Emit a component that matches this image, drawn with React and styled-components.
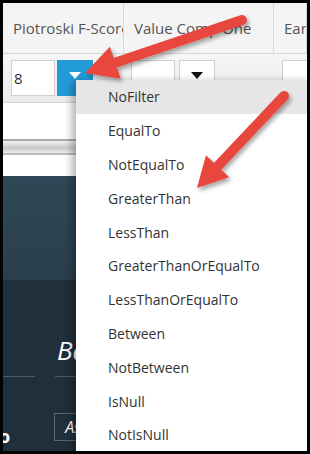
import React from "react";
import styled, { createGlobalStyle } from "styled-components";

const GlobalStyle = createGlobalStyle`
  html, body {
    margin: 0;
    padding: 0;
    background: #000;
  }
  * {
    box-sizing: border-box;
  }
`;

const Screen = styled.div`
  width: 310px;
  height: 454px;
  padding: 3px;
  background: #000;
  position: relative;
  font-family: "Open Sans", "Noto Sans", sans-serif;
`;

const Viewport = styled.div`
  width: 304px;
  height: 448px;
  position: relative;
  overflow: hidden;
  background: #fff;
  display: flex;
  flex-direction: column;
`;

const Row = styled.div`
  display: grid;
  grid-template-columns: 121px 150px 1fr;
  height: ${(p) => p.h}px;
  border-bottom: 1px solid #d6d6d6;
  background: ${(p) =>
    p.filter ? "linear-gradient(#f6f6f6, #ebebeb)" : "#f4f4f4"};
  flex-shrink: 0;
`;

const HeadCell = styled.div`
  border-right: 1px solid #d9d9d9;
  padding-left: 10px;
  display: flex;
  align-items: center;
  font-size: 15px;
  color: #555;
  white-space: nowrap;
  overflow: hidden;
`;

const FilterCell = styled.div`
  display: flex;
  align-items: center;
  gap: 2px;
  padding-left: ${(p) => p.pad}px;
`;

const Input = styled.div`
  width: 44px;
  height: 36px;
  background: #fff;
  border: 1px solid #cfcfcf;
  display: flex;
  align-items: center;
  padding-left: 2px;
  font-size: 15px;
  color: #333;
`;

const DropButton = styled.div`
  width: 36px;
  height: 36px;
  margin-left: ${(p) => p.gap || 0}px;
  background: ${(p) => (p.active ? "#239bd8" : "#fff")};
  border: 1px solid ${(p) => (p.active ? "#239bd8" : "#cfcfcf")};
  display: flex;
  justify-content: center;
  padding-top: 11px;
`;

const Triangle = styled.div`
  width: 0;
  height: 0;
  border-left: 6px solid transparent;
  border-right: 6px solid transparent;
  border-top: 7px solid ${(p) => (p.white ? "#fff" : "#111")};
`;

const Blank = styled.div`
  height: ${(p) => p.h}px;
  flex-shrink: 0;
  background: #fff;
`;

const Scrollbar = styled.div`
  height: 16px;
  flex-shrink: 0;
  border-top: 2px solid #a9a9a9;
  background: linear-gradient(#f2f2f2, #d4d4d4 45%, #c8c8c8 55%, #ececec);
  border-bottom: 2px solid #bdbdbd;
`;

const Dark = styled.div`
  flex: 1;
  display: flex;
  flex-direction: column;
  background: #1f2f3c;
`;

const DarkTop = styled.div`
  height: 104px;
  background: linear-gradient(#2f4756, #2a3f4d);
`;

const Banner = styled.div`
  padding: 52px 0 0 54px;
  font-size: 26px;
  font-style: italic;
  color: #fff;
`;

const Rules = styled.div`
  display: flex;
  gap: 20px;
  margin-top: 8px;
`;

const Rule = styled.div`
  width: ${(p) => p.w}px;
  height: 1px;
  background: #4a5c68;
`;

const Footer = styled.div`
  display: flex;
  align-items: flex-end;
  margin-top: 36px;
  gap: 44px;
`;

const Logo = styled.span`
  font-weight: 700;
  font-size: 18px;
  color: #fff;
  margin-left: -4px;
  line-height: 10px;
`;

const Outlined = styled.div`
  width: 40px;
  height: 28px;
  border: 1px solid #566873;
  color: #fff;
  font-style: italic;
  font-size: 16px;
  padding: 2px 0 0 10px;
`;

const Menu = styled.div`
  position: absolute;
  left: 73px;
  top: 77px;
  width: 240px;
  background: #fff;
  box-shadow: -4px 2px 8px rgba(0, 0, 0, 0.3);
  display: flex;
  flex-direction: column;
`;

const MenuItem = styled.div`
  height: 33.8px;
  display: flex;
  align-items: center;
  padding-left: 32px;
  font-size: 14px;
  color: #333;
  background: ${(p) => (p.selected ? "#e6e6e6" : "#fff")};
`;

const Overlay = styled.svg`
  position: absolute;
  left: 0;
  top: 0;
  pointer-events: none;
`;

const options = [
  "NoFilter",
  "EqualTo",
  "NotEqualTo",
  "GreaterThan",
  "LessThan",
  "GreaterThanOrEqualTo",
  "LessThanOrEqualTo",
  "Between",
  "NotBetween",
  "IsNull",
  "NotIsNull",
];

const Arrow = ({ tail, tip, width = 10, head = 32, spread = 17 }) => {
  const dx = tip[0] - tail[0];
  const dy = tip[1] - tail[1];
  const len = Math.hypot(dx, dy);
  const ux = dx / len;
  const uy = dy / len;
  const nx = -uy;
  const ny = ux;
  const bx = tip[0] - ux * head;
  const by = tip[1] - uy * head;
  const pts = [
    [bx + nx * spread, by + ny * spread],
    tip,
    [bx - nx * spread, by - ny * spread],
  ]
    .map((p) => p.join(","))
    .join(" ");
  return (
    <g filter="url(#shadow)">
      <line
        x1={tail[0]}
        y1={tail[1]}
        x2={bx + ux * 4}
        y2={by + uy * 4}
        stroke="#e8473d"
        strokeWidth={width}
        strokeLinecap="round"
      />
      <polygon points={pts} fill="#e8473d" />
    </g>
  );
};

const App = () => {
  return (
    <>
      <GlobalStyle />
      <Screen>
        <Viewport>
          <Row h={51}>
            <HeadCell>Piotroski F-Score</HeadCell>
            <HeadCell>Value Comp One</HeadCell>
            <HeadCell>Earnings</HeadCell>
          </Row>
          <Row h={49} filter>
            <FilterCell pad={8}>
              <Input>8</Input>
              <DropButton active>
                <Triangle white />
              </DropButton>
            </FilterCell>
            <FilterCell pad={7}>
              <Input />
              <DropButton gap={2}>
                <Triangle />
              </DropButton>
            </FilterCell>
            <FilterCell pad={8}>
              <Input />
            </FilterCell>
          </Row>
          <Blank h={36} />
          <Scrollbar />
          <Blank h={21} />
          <Dark>
            <DarkTop />
            <Banner>Ba</Banner>
            <Rules>
              <Rule w={32} />
              <Rule w={60} />
            </Rules>
            <Footer>
              <Logo>o</Logo>
              <Outlined>As</Outlined>
            </Footer>
          </Dark>
          <Menu>
            {options.map((o, i) => (
              <MenuItem key={o} selected={i === 0}>
                {o}
              </MenuItem>
            ))}
          </Menu>
        </Viewport>
        <Overlay width="310" height="454">
          <defs>
            <filter id="shadow" x="-20%" y="-20%" width="140%" height="140%">
              <feDropShadow
                dx="2"
                dy="3"
                stdDeviation="2"
                floodColor="#000"
                floodOpacity="0.35"
              />
            </filter>
          </defs>
          <Arrow tail={[242, 20]} tip={[85, 73]} />
          <Arrow tail={[284, 96]} tip={[197, 188]} head={30} spread={16} />
        </Overlay>
      </Screen>
    </>
  );
};

export default App;
